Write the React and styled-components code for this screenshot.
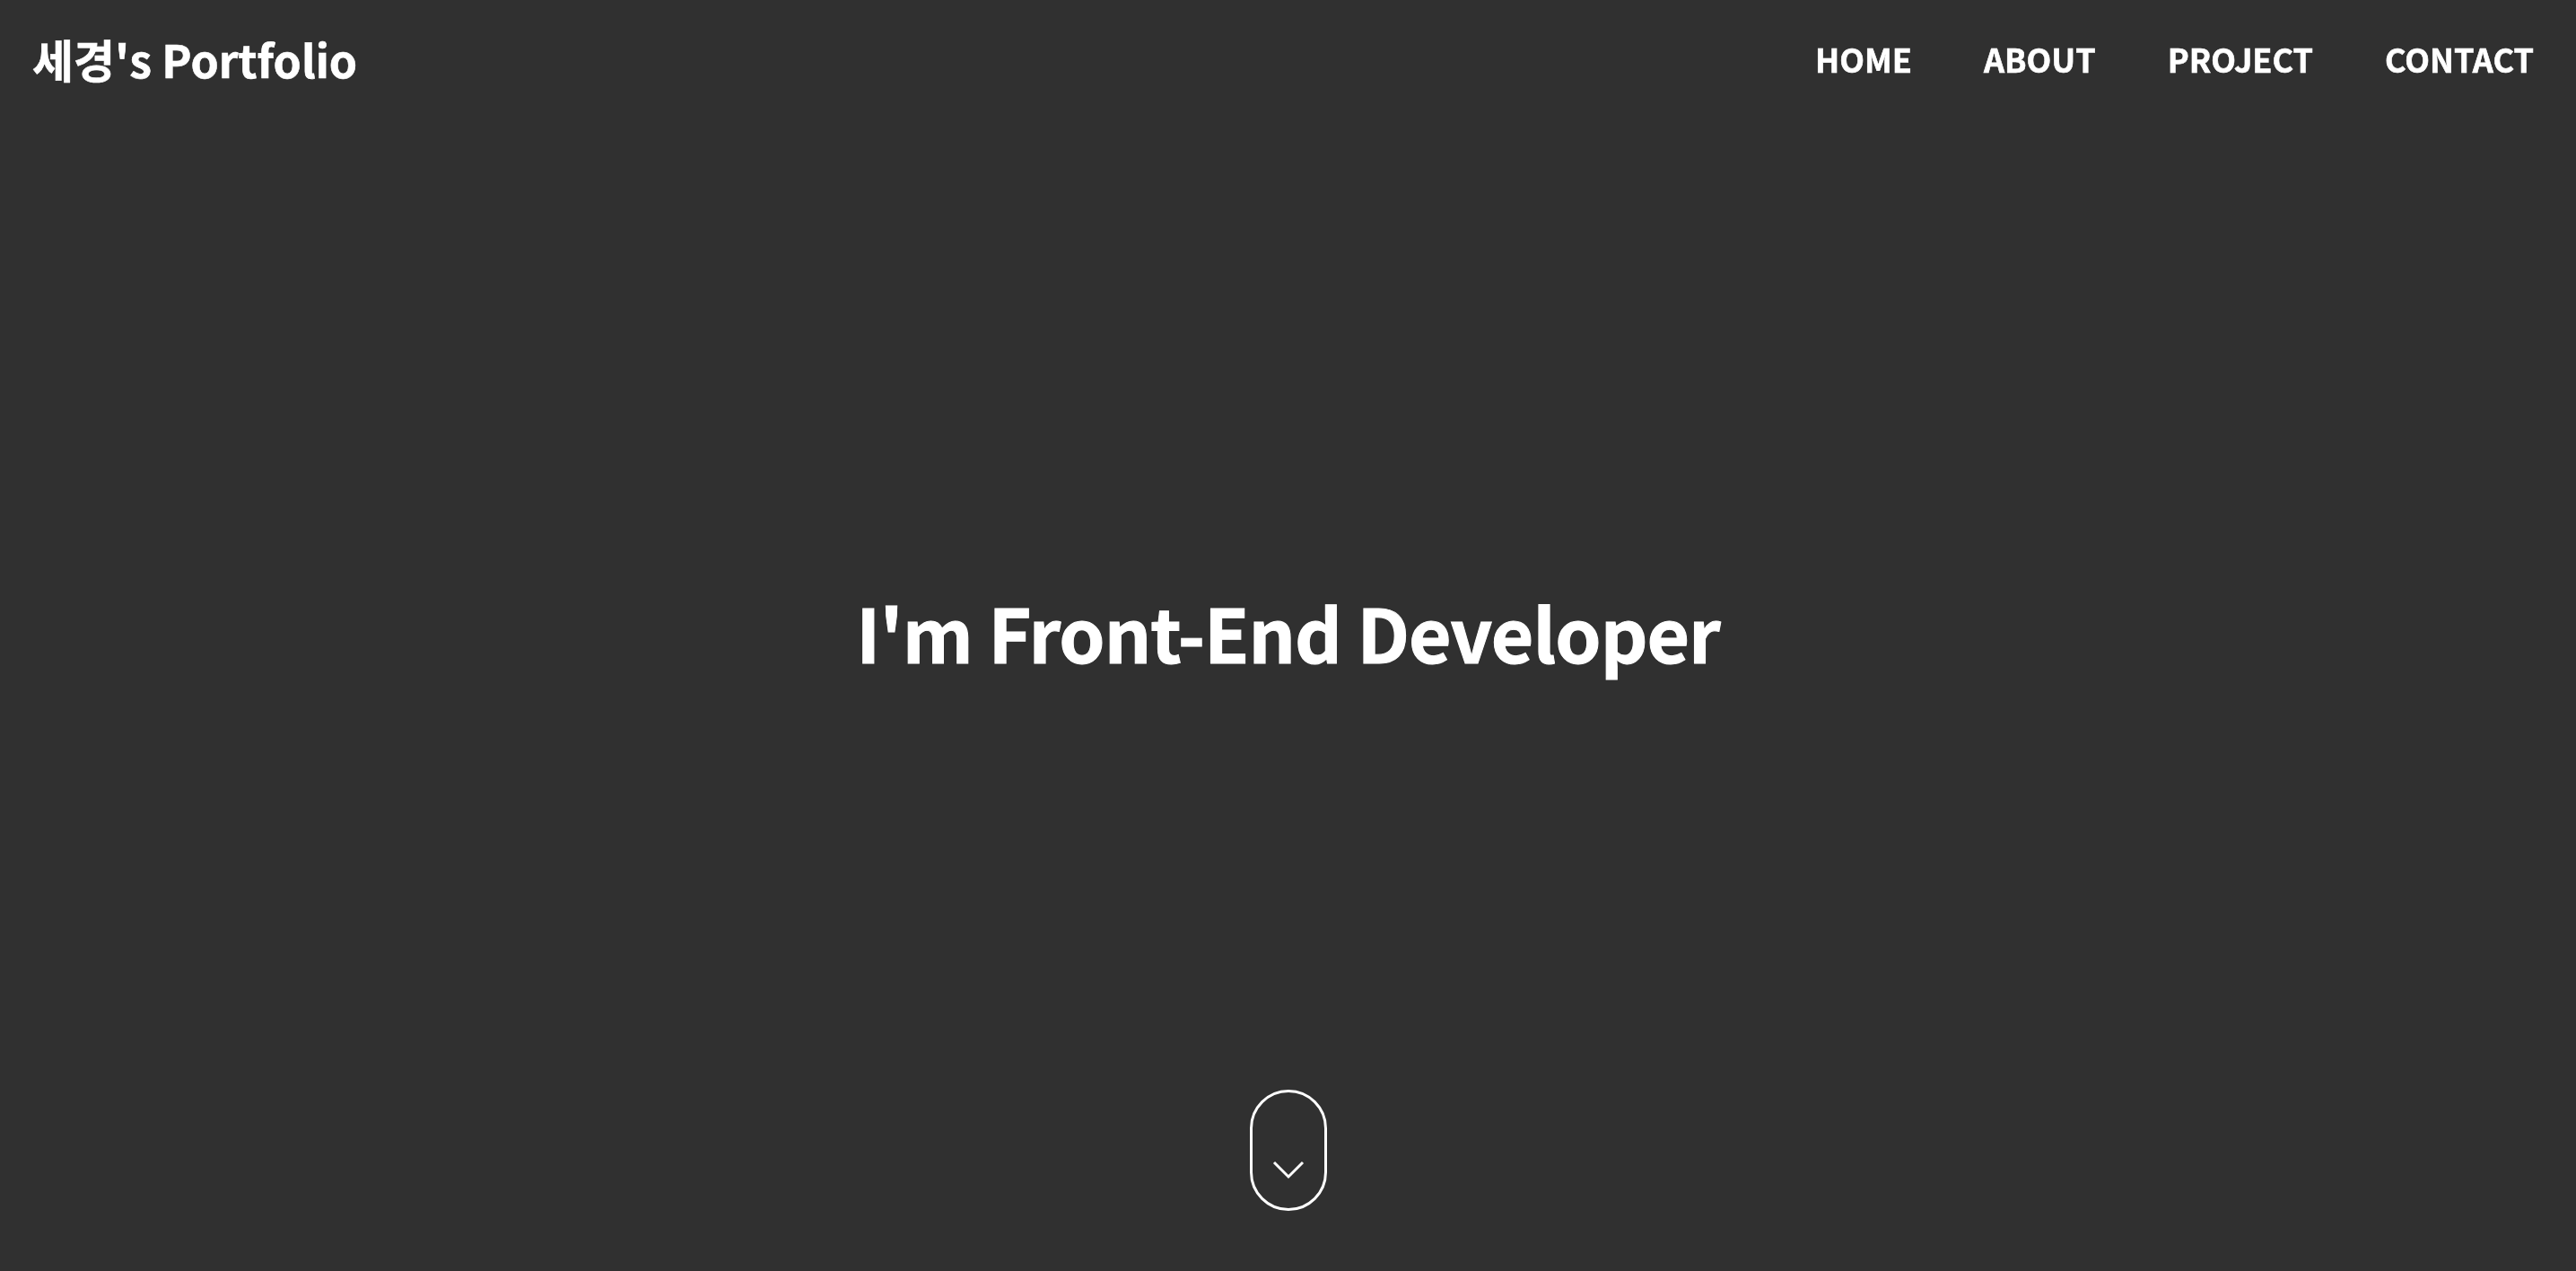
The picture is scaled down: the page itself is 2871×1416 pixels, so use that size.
import React from 'react';
import styled, { createGlobalStyle } from 'styled-components';

const GlobalStyle = createGlobalStyle`
  * {
    box-sizing: border-box;
  }
  html, body {
    margin: 0;
    padding: 0;
    background-color: #303030;
    color: #ffffff;
    font-family: "Noto Sans CJK KR", "Noto Sans", sans-serif;
  }
  a {
    color: inherit;
    text-decoration: none;
  }
`

const Header = styled.header`
  position: fixed;
  top: 0;
  left: 0;
  right: 0;
  height: 130px;
  display: flex;
  align-items: center;
  justify-content: space-between;
  padding: 0 47px 0 36px;
  z-index: 10;
`
const Logo = styled.a`
  font-size: 50px;
  font-weight: 700;
  -webkit-text-stroke: 0.6px #ffffff;
`
const Nav = styled.nav`
  display: flex;
  gap: 80px;
`
const NavLink = styled.a`
  font-size: 36px;
  font-weight: 700;
  text-transform: uppercase;
  -webkit-text-stroke: 0.6px #ffffff;
`

const Hero = styled.section`
  height: 100vh;
  display: grid;
  grid-template-rows: 1fr auto 1fr;
  justify-items: center;
`
const Title = styled.h1`
  grid-row: 2;
  margin: 0 0 10px;
  font-size: 82px;
  font-weight: 700;
  letter-spacing: -1px;
  -webkit-text-stroke: 1px #ffffff;
`
const ScrollButton = styled.a`
  grid-row: 3;
  align-self: end;
  margin-bottom: 67px;
  width: 86px;
  height: 135px;
  border: 3px solid #ffffff;
  border-radius: 43px;
  display: flex;
  justify-content: center;
  align-items: center;
  padding-top: 42px;
`

export default function App() {
  return (
    <>
      <GlobalStyle />
      <Header>
        <Logo href="#home">세경's Portfolio</Logo>
        <Nav>
          <NavLink href="#home">home</NavLink>
          <NavLink href="#about">about</NavLink>
          <NavLink href="#project">project</NavLink>
          <NavLink href="#contact">contact</NavLink>
        </Nav>
      </Header>
      <Hero id="home">
        <Title>I'm Front-End Developer</Title>
        <ScrollButton href="#about">
          <svg width="36" height="22" viewBox="0 0 36 22" fill="none">
            <polyline points="2,3 18,19 34,3" stroke="#ffffff" strokeWidth="3" />
          </svg>
        </ScrollButton>
      </Hero>
    </>
  )
}
